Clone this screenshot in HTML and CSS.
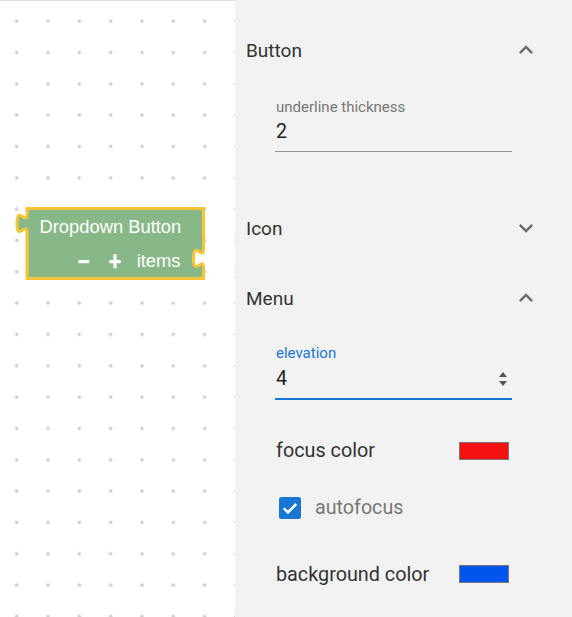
FILE: index.html
```html
<!DOCTYPE html>
<html>
<head>
<meta charset="utf-8">
<link rel="stylesheet" href="styles.css">
</head>
<body>
<div class="app">
  <div class="canvas">
    <svg class="block" width="205" height="85" viewBox="10 200 205 85">
      <path class="block-shape" d="M 27 208.5 H 203.5 V 249 c 0,12.5 -10,-10 -10,9.375 s 10,-3.125 10,9.375 V 278.5 H 27 V 232.75 c 0,-12.5 -10,10 -10,-9.375 s 10,3.125 10,-9.375 Z"/>
      <text class="block-text" x="39.5" y="233.3">Dropdown Button</text>
      <rect class="block-icon" x="78.3" y="260" width="11" height="3.2"/>
      <rect class="block-icon" x="109.3" y="260" width="11.4" height="3.2"/>
      <rect class="block-icon" x="113.4" y="254.3" width="3.2" height="14"/>
      <text class="block-text" x="136.7" y="267.3">items</text>
    </svg>
  </div>
  <div class="panel">
    <section class="group">
      <div class="group-head">
        <span class="group-title">Button</span>
        <svg class="chev" viewBox="0 0 24 24"><path d="M12 8l-6 6 1.41 1.41L12 10.83l4.59 4.58L18 14z"/></svg>
      </div>
      <div class="group-body body-button">
        <div class="field">
          <div class="field-label">underline thickness</div>
          <div class="field-input"><span class="field-value">2</span></div>
        </div>
      </div>
    </section>
    <section class="group">
      <div class="group-head">
        <span class="group-title">Icon</span>
        <svg class="chev" viewBox="0 0 24 24"><path d="M16.59 8.59L12 13.17 7.41 8.59 6 10l6 6 6-6z"/></svg>
      </div>
    </section>
    <section class="group">
      <div class="group-head">
        <span class="group-title">Menu</span>
        <svg class="chev" viewBox="0 0 24 24"><path d="M12 8l-6 6 1.41 1.41L12 10.83l4.59 4.58L18 14z"/></svg>
      </div>
      <div class="group-body body-menu">
        <div class="field focused">
          <div class="field-label">elevation</div>
          <div class="field-input">
            <span class="field-value">4</span>
            <span class="spinner"><span class="spin-up"></span><span class="spin-down"></span></span>
          </div>
        </div>
        <div class="row row-focus">
          <span class="row-label">focus color</span>
          <span class="swatch swatch-red"></span>
        </div>
        <div class="row row-check">
          <svg class="checkbox" width="22" height="22" viewBox="0 0 22 22">
            <rect x="0" y="0" width="22" height="22" rx="2.5" fill="#1976d2"/>
            <path d="M4.8 11.4 L9 15.4 L17.2 7" fill="none" stroke="#fff" stroke-width="2.6"/>
          </svg>
          <span class="check-label">autofocus</span>
        </div>
        <div class="row row-bg">
          <span class="row-label">background color</span>
          <span class="swatch swatch-blue"></span>
        </div>
      </div>
    </section>
  </div>
</div>
</body>
</html>
```

FILE: styles.css
```css
html, body {
  margin: 0;
  padding: 0;
}
body {
  font-family: Roboto, "Liberation Sans", sans-serif;
  background: #f2f2f2;
}
.app {
  display: flex;
  width: 572px;
  height: 617px;
  overflow: hidden;
}
.canvas {
  position: relative;
  width: 235px;
  height: 617px;
  flex: none;
  box-sizing: border-box;
  border-top: 1.5px solid #dcdcdc;
  background-color: #fff;
  background-image: radial-gradient(circle at center, #cfcfcf 0, #cfcfcf 1.4px, rgba(255,255,255,0) 2px);
  background-size: 31.33px 31.33px;
  background-position: 1px 4.5px;
}
.block {
  position: absolute;
  left: 10px;
  top: 198.5px;
}
.block-shape {
  fill: #88b888;
  stroke: #f9c536;
  stroke-width: 3;
  stroke-linejoin: miter;
}
.block-text {
  font-family: "Liberation Sans", Arial, sans-serif;
  font-size: 18.35px;
  fill: #fff;
}
.block-icon {
  fill: #fff;
}
.panel {
  flex: 1;
  background: #f2f2f2;
  padding: 15.3px 32px 0 11px;
}
.group-head {
  height: 70px;
  display: flex;
  align-items: center;
  justify-content: space-between;
}
.group-title {
  font-size: 19px;
  color: #333;
}
.chev {
  width: 28px;
  height: 28px;
  fill: #6b6b6b;
}
.group-body {
  padding-left: 29px;
  padding-right: 0;
}
.body-button {
  padding-top: 13.3px;
  padding-bottom: 41px;
}
.body-menu {
  padding-top: 11.5px;
}
.field {
  width: 237px;
}
.field-label {
  font-size: 15px;
  line-height: 16px;
  color: #777;
  padding-left: 1px;
}
.field.focused .field-label {
  color: #1976d2;
}
.field-input {
  margin-top: 5.6px;
  height: 24px;
  padding-bottom: 7px;
  border-bottom: 1px solid #949494;
  display: flex;
  align-items: center;
  justify-content: space-between;
  padding-left: 1px;
}
.field.focused .field-input {
  border-bottom: 2px solid #1976d2;
  margin-top: 6px;
  padding-bottom: 7.5px;
}
.field-value {
  font-size: 19.7px;
  line-height: 24px;
  color: #222;
}
.spinner {
  display: flex;
  flex-direction: column;
  align-items: center;
  gap: 4px;
  margin-right: 5px;
  margin-top: 1px;
}
.spin-up {
  width: 0;
  height: 0;
  border-left: 4.5px solid transparent;
  border-right: 4.5px solid transparent;
  border-bottom: 5px solid #555;
}
.spin-down {
  width: 0;
  height: 0;
  border-left: 4.5px solid transparent;
  border-right: 4.5px solid transparent;
  border-top: 5.5px solid #555;
}
.row {
  display: flex;
  align-items: center;
  justify-content: space-between;
  width: 233px;
  height: 40px;
  padding-left: 1px;
}
.row-focus {
  margin-top: 30.5px;
}
.row-check {
  justify-content: flex-start;
  margin-top: 17.2px;
}
.row-bg {
  margin-top: 26.3px;
}
.row-label {
  font-size: 19.8px;
  color: #333;
}
.swatch {
  width: 48px;
  height: 16px;
  border: 1px solid #777;
}
.swatch-red {
  background: #f41111;
}
.swatch-blue {
  background: #0055ee;
}
.checkbox {
  margin-left: 3px;
  flex: none;
}
.check-label {
  margin-left: 14px;
  font-size: 19.7px;
  color: #777;
}
```
